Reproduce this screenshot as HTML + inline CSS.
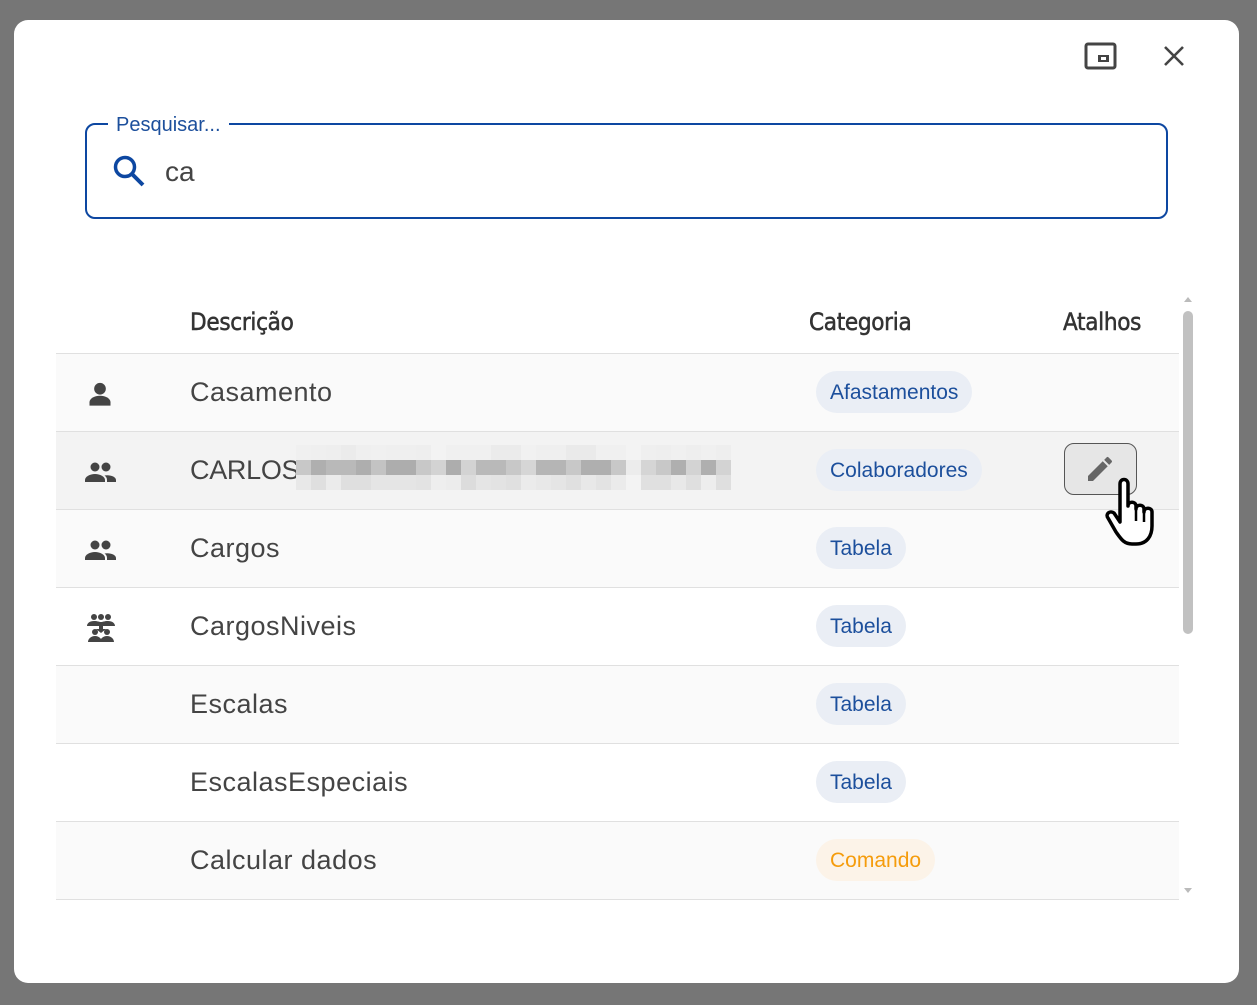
<!DOCTYPE html>
<html><head><meta charset="utf-8"><style>
*{margin:0;padding:0;box-sizing:border-box}
body{width:1257px;height:1005px;background:#767676;font-family:"Liberation Sans",sans-serif;position:relative;overflow:hidden}
.dlg{position:absolute;left:14px;top:20px;width:1225px;height:963px;background:#fff;border-radius:14px}
.abs{position:absolute}
.field{left:71px;top:103px;width:1083px;height:96px;border:2.5px solid #0d47a1;border-radius:10px}
.lbl{left:94px;top:94px;background:#fff;padding:0 8px;color:#1c4f9c;font-size:20px}
.hd{top:288px;font-size:24px;color:#333;font-family:"DejaVu Sans Condensed","Liberation Sans",sans-serif;-webkit-text-stroke:0.5px #333;letter-spacing:-0.3px}
.row{position:absolute;left:42px;width:1123px;height:78px;border-top:1.5px solid #e0e0e0}
.txt{position:absolute;left:134px;top:23px;font-size:27px;color:#444;letter-spacing:0.5px}
.chip{position:absolute;left:760px;top:17px;height:42px;border-radius:21px;background:#eaeef5;color:#1c4f9c;font-size:21px;line-height:44px;padding:0 14px}
.ic{position:absolute;left:30px;top:26px}
.px{position:absolute;left:240px;top:13px;display:flex;flex-direction:column;z-index:2}
.px div{display:flex}.px span{width:15px;height:15px}
</style></head><body>
<div class="dlg">
 <svg class="abs" style="left:1070px;top:22px" width="34" height="30" viewBox="0 0 34 30"><rect x="2" y="2" width="29" height="24" rx="2" fill="none" stroke="#444" stroke-width="3"/><rect x="14" y="13" width="11" height="7" fill="#444"/><rect x="17" y="15" width="5" height="3" fill="#fff"/></svg>
 <svg class="abs" style="left:1148px;top:24px" width="24" height="24" viewBox="0 0 24 24"><path d="M3 3L21 21M21 3L3 21" stroke="#444" stroke-width="2.6"/></svg>
 <div class="abs field"></div>
 <div class="abs lbl">Pesquisar...</div>
 <svg class="abs" style="left:98px;top:134px" width="34" height="34" viewBox="0 0 34 34"><circle cx="13" cy="13" r="9.5" fill="none" stroke="#0d47a1" stroke-width="3.5"/><path d="M20 20L31 31" stroke="#0d47a1" stroke-width="4"/></svg>
 <div class="abs" style="left:151px;top:136px;font-size:28px;color:#444">ca</div>
 <div class="abs hd" style="left:176px">Descrição</div>
 <div class="abs hd" style="left:795px">Categoria</div>
 <div class="abs hd" style="left:1049px">Atalhos</div>
 <div class="abs" style="left:1169px;top:271px;width:10px;height:610px">
  <div class="abs" style="left:1px;top:6px;width:0;height:0;border-left:4px solid transparent;border-right:4px solid transparent;border-bottom:5px solid #bbb"></div>
  <div class="abs" style="left:0;top:20px;width:10px;height:323px;background:#c1c1c1;border-radius:5px"></div>
  <div class="abs" style="left:1px;top:597px;width:0;height:0;border-left:4px solid transparent;border-right:4px solid transparent;border-top:5px solid #bbb"></div>
 </div>

 <div class="row" style="top:333px;background:#fafafa">
  <svg class="ic" width="28" height="28" viewBox="0 0 24 24"><circle cx="12" cy="7.5" r="5" fill="#444"/><path d="M3 22v-3c0-3 4-5.5 9-5.5s9 2.5 9 5.5v3z" fill="#444"/></svg>
  <div class="txt">Casamento</div><div class="chip">Afastamentos</div></div>
 <div class="row" style="top:411px;background:#f3f3f3;z-index:5">
  <svg class="ic" width="34" height="28" viewBox="0 0 34 28" style="left:28px"><circle cx="11" cy="9" r="4.5" fill="#444"/><circle cx="22" cy="9" r="4.5" fill="#444"/><path d="M1 24v-2c0-3.5 5-6 10-6s10 2.5 10 6v2z" fill="#444"/><path d="M23 24v-2c0-2-1-3.5-2.5-4.5 5-1 11.5 1 11.5 4.5v2z" fill="#444"/></svg>
  <div class="txt" style="letter-spacing:-0.3px">CARLOS</div>
  <div class="px">
   <div><span style="background:#f0f0f0"></span><span style="background:#efefef"></span><span style="background:#eee"></span><span style="background:#ebebeb"></span><span style="background:#efefef"></span><span style="background:#f0f0f0"></span><span style="background:#efefef"></span><span style="background:#efefef"></span><span style="background:#eee"></span><span style="background:#f3f3f3"></span><span style="background:#f0f0f0"></span><span style="background:#f0f0f0"></span><span style="background:#f0f0f0"></span><span style="background:#ebebeb"></span><span style="background:#ebebeb"></span><span style="background:#f1f1f1"></span><span style="background:#efefef"></span><span style="background:#efefef"></span><span style="background:#eaeaea"></span><span style="background:#eaeaea"></span><span style="background:#f0f0f0"></span><span style="background:#f0f0f0"></span><span style="background:#f3f3f3"></span><span style="background:#efefef"></span><span style="background:#eee"></span><span style="background:#f0f0f0"></span><span style="background:#eee"></span><span style="background:#f0f0f0"></span><span style="background:#eee"></span></div>
   <div><span style="background:#c8c8c8"></span><span style="background:#afafaf"></span><span style="background:#b9b9b9"></span><span style="background:#b9b9b9"></span><span style="background:#aeaeae"></span><span style="background:#c3c3c3"></span><span style="background:#adadad"></span><span style="background:#adadad"></span><span style="background:#c8c8c8"></span><span style="background:#d3d3d3"></span><span style="background:#adadad"></span><span style="background:#d3d3d3"></span><span style="background:#b9b9b9"></span><span style="background:#b9b9b9"></span><span style="background:#c8c8c8"></span><span style="background:#d6d6d6"></span><span style="background:#b5b5b5"></span><span style="background:#b5b5b5"></span><span style="background:#c8c8c8"></span><span style="background:#afafaf"></span><span style="background:#afafaf"></span><span style="background:#c8c8c8"></span><span style="background:#ececec"></span><span style="background:#d5d5d5"></span><span style="background:#c8c8c8"></span><span style="background:#afafaf"></span><span style="background:#d3d3d3"></span><span style="background:#afafaf"></span><span style="background:#d3d3d3"></span></div>
   <div><span style="background:#e8e8e8"></span><span style="background:#dfdfdf"></span><span style="background:#ebebeb"></span><span style="background:#dfdfdf"></span><span style="background:#dfdfdf"></span><span style="background:#e5e5e5"></span><span style="background:#e5e5e5"></span><span style="background:#e5e5e5"></span><span style="background:#e3e3e3"></span><span style="background:#eee"></span><span style="background:#ececec"></span><span style="background:#dcdcdc"></span><span style="background:#e5e5e5"></span><span style="background:#e3e3e3"></span><span style="background:#e0e0e0"></span><span style="background:#ebebeb"></span><span style="background:#e8e8e8"></span><span style="background:#e5e5e5"></span><span style="background:#e0e0e0"></span><span style="background:#e8e8e8"></span><span style="background:#e3e3e3"></span><span style="background:#ebebeb"></span><span style="background:#f3f3f3"></span><span style="background:#e0e0e0"></span><span style="background:#e0e0e0"></span><span style="background:#e8e8e8"></span><span style="background:#dfdfdf"></span><span style="background:#ededed"></span><span style="background:#dfdfdf"></span></div>
  </div>
  <div class="chip">Colaboradores</div>
  <div class="abs" style="left:1008px;top:11px;width:73px;height:52px;border:1.5px solid #555;border-radius:10px;background:#e6e6e6"></div>
  <svg class="abs" style="left:1028px;top:21px" width="32" height="32" viewBox="0 0 24 24"><path d="M3 17.25V21h3.75L17.81 9.94l-3.75-3.75L3 17.25zM20.71 7.04a1 1 0 000-1.41l-2.34-2.34a1 1 0 00-1.41 0l-1.83 1.83 3.75 3.75 1.83-1.83z" fill="#666"/></svg>
  <svg class="abs" style="left:1047px;top:44px" width="54" height="70" viewBox="0 0 54 70"><path d="M17 46V8c0-6 8-6 8 0v22c0-5 8-5 8 0v3c0-5 8-5 8 0v3c0-5 8-5 8 0v14c0 10-5 18-16 18h-4c-8 0-11-5-16-12L5 42c-3-4 2-8 6-5z" fill="#fff" stroke="#000" stroke-width="3.5" stroke-linejoin="round"/><path d="M33 33v12M41 36v10" stroke="#000" stroke-width="2.5"/></svg>
 </div>
 <div class="row" style="top:489px;background:#fafafa">
  <svg class="ic" width="34" height="28" viewBox="0 0 34 28" style="left:28px"><circle cx="11" cy="9" r="4.5" fill="#444"/><circle cx="22" cy="9" r="4.5" fill="#444"/><path d="M1 24v-2c0-3.5 5-6 10-6s10 2.5 10 6v2z" fill="#444"/><path d="M23 24v-2c0-2-1-3.5-2.5-4.5 5-1 11.5 1 11.5 4.5v2z" fill="#444"/></svg>
  <div class="txt">Cargos</div><div class="chip">Tabela</div></div>
 <div class="row" style="top:567px;background:#fff">
  <svg class="ic" width="32" height="32" viewBox="0 0 32 32" style="left:29px;top:24px"><circle cx="9" cy="5" r="3" fill="#444"/><circle cx="16" cy="5" r="3" fill="#444"/><circle cx="23" cy="5" r="3" fill="#444"/><path d="M2 14c0-3 3-5 7-5s5 1 7 1 3-1 7-1 7 2 7 5z" fill="#444"/><path d="M14 14h4v3h3l-5 4-5-4h3z" fill="#444"/><circle cx="10" cy="20" r="3" fill="#444"/><circle cx="22" cy="20" r="3" fill="#444"/><path d="M3 30c0-3 3-6 7-6s7 3 7 6zM15 30c0-3 3-6 7-6s7 3 7 6z" fill="#444"/></svg>
  <div class="txt">CargosNiveis</div><div class="chip">Tabela</div></div>
 <div class="row" style="top:645px;background:#fafafa"><div class="txt">Escalas</div><div class="chip">Tabela</div></div>
 <div class="row" style="top:723px;background:#fff"><div class="txt">EscalasEspeciais</div><div class="chip">Tabela</div></div>
 <div class="row" style="top:801px;background:#fafafa;border-bottom:1.5px solid #e0e0e0;height:79px"><div class="txt">Calcular dados</div><div class="chip" style="background:#fcf3e8;color:#f59c0c">Comando</div></div>
</div>
</body></html>
